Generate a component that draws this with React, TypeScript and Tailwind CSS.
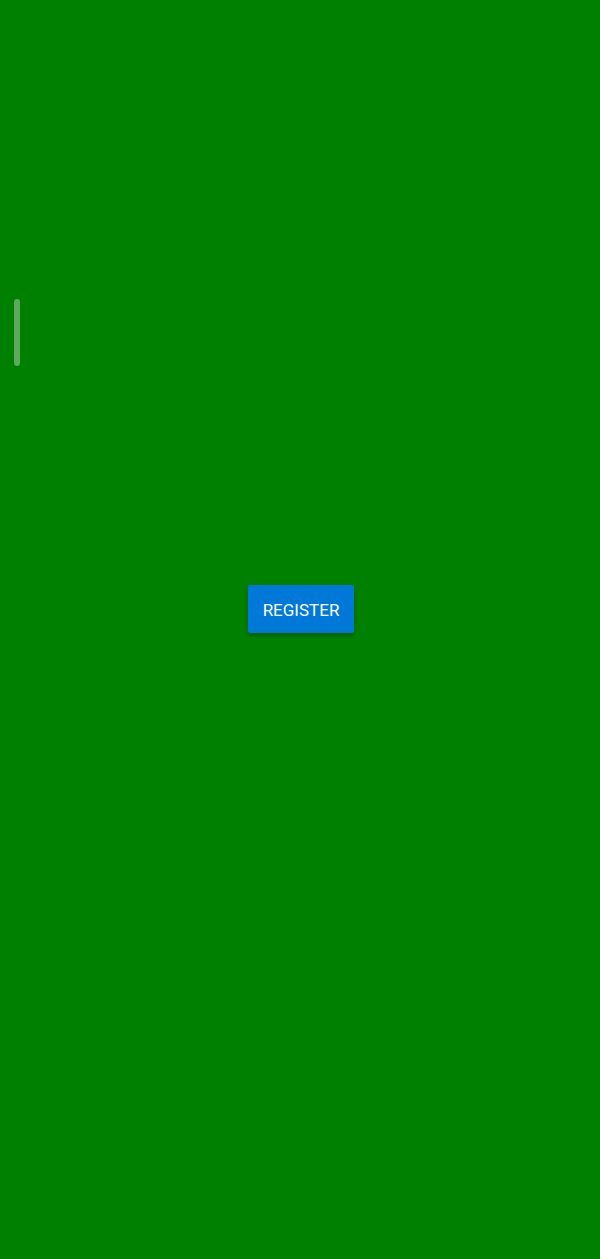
import React from "react";

export default function App() {
  return (
    <div className="relative w-[600px] h-[1259px] bg-[#008000] flex justify-center pt-[585px]" style={{ fontFamily: "Roboto, 'Noto Sans', sans-serif" }}>
      <div className="absolute left-[14px] top-[299px] w-[6px] h-[67px] rounded-[3px] bg-[#5fa85f]" />
      <button className="h-[48px] w-[106px] bg-[#0078d7] text-white text-[17px] leading-none pt-[2px] rounded-[2px] shadow-[0_2px_4px_rgba(0,0,0,0.35)] ml-[2px]">
        REGISTER
      </button>
    </div>
  );
}
